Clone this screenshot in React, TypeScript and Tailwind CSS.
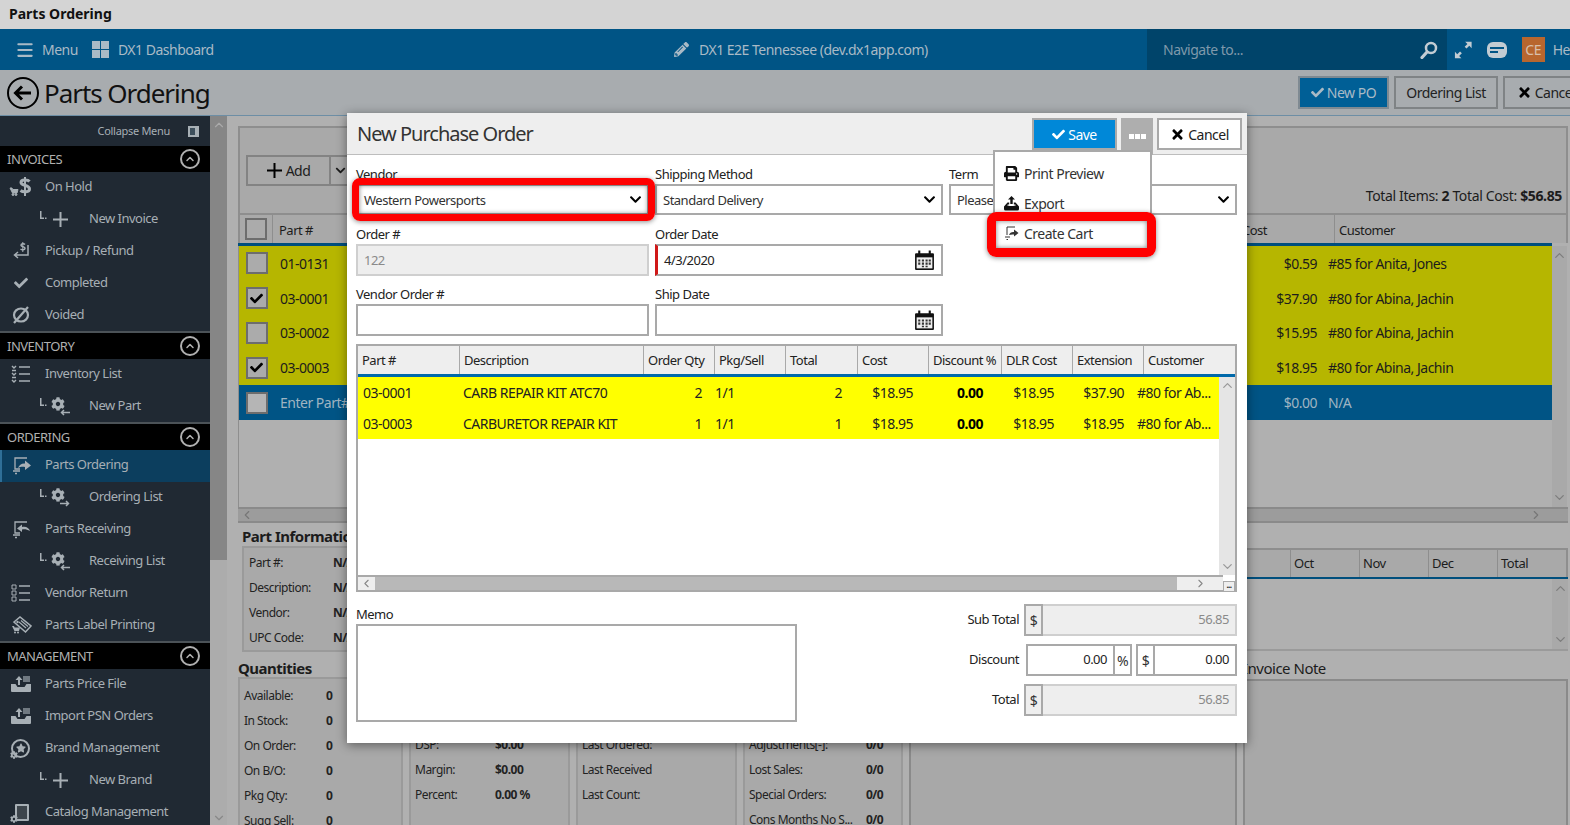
import React from 'react';
import { FaCheck, FaChevronDown, FaCog, FaPencilAlt, FaPrint, FaStar, FaTimes } from 'react-icons/fa';
import { ChevronDown, ChevronLeft, ChevronRight, ChevronUp, Menu } from 'lucide-react';

type SideItem = { label: string; icon: React.ReactNode; sub?: boolean; active?: boolean };

// small cart that sits on the corner of most sidebar icons
const MiniCart = ({ x, y }: { x: number; y: number }) => (
  <g transform={`translate(${x} ${y})`} fill="currentColor">
    <path d="M0 0h2l.6 1.500h5.400l-1 3.500h-4.500z" />
    <circle cx="3" cy="6.500" r="1" />
    <circle cx="6" cy="6.500" r="1" />
  </g>
);

const OnHoldIcon = () => (
  <svg width="24" height="22" viewBox="0 0 24 22" fill="none" stroke="currentColor">
    <path d="M20.500 5.500C19 3.500 12 3 12 6.500c0 3.500 8.500 2 8.500 6.500 0 3.500-6.500 3.500-9 1.500" strokeWidth="3" />
    <path d="M16 1v19" strokeWidth="2" />
    <MiniCart x={1} y={12} />
  </svg>
);

const PickupIcon = () => (
  <svg width="24" height="22" viewBox="0 0 24 22" fill="none" stroke="currentColor">
    <path d="M16 4.500c-1-1-4-1-4 .8 0 2 4 1 4 3 0 1.800-3 1.800-4.500.8" strokeWidth="1.500" />
    <path d="M13.800 2v10" strokeWidth="1" />
    <path d="M19 5v10H6M9 12l-3.500 3L9 18" strokeWidth="1.500" />
  </svg>
);

const VoidIcon = () => (
  <svg width="20" height="20" viewBox="0 0 20 20" fill="none" stroke="currentColor" strokeWidth="2.200">
    <ellipse cx="10" cy="10" rx="7" ry="6.500" />
    <path d="M3 18 17 2" />
  </svg>
);

const ListIcon = ({ tall }: { tall?: boolean }) => (
  <svg width="22" height="20" viewBox="0 0 22 20" fill="none" stroke="currentColor">
    <path d="M9 3h11M9 10h11M9 17h11" strokeWidth="1.500" />
    {tall ? (
      <path d="M2 2h4v4H2zM2 8h4v4H2zM2 14h4v4H2z" strokeWidth="1" />
    ) : (
      <path d="M2 2l2 2 2-2M2 6.500h4M2 9l2 2 2-2M2 13.500h4M2 16l2 2 2-2" strokeWidth="1.400" />
    )}
  </svg>
);

const BoxArrowIcon = ({ back }: { back?: boolean }) => (
  <svg width="22" height="20" viewBox="0 0 22 20" fill="none" stroke="currentColor">
    <path d="M17 3H5v11h5" strokeWidth="1.300" />
    {back ? (
      <path d="M20 12c-1-3-4-5-8-4V5.500L7 9.500l5 3.500V10.500c3-.5 5 0 8 1.500z" fill="currentColor" stroke="none" />
    ) : (
      <path d="M8 13c1-3 4-5 7-4.500V5.500l6 5-6 4.500v-3c-3-.5-5 0-7 1z" fill="currentColor" stroke="none" />
    )}
    <path d="M3 16h7M5 18.500h2" strokeWidth="1.500" />
  </svg>
);

const LabelIcon = () => (
  <svg width="22" height="20" viewBox="0 0 22 20">
    <path d="M4 7 10 2l11 9-5.500 6z" fill="none" stroke="currentColor" strokeWidth="1.600" />
    <path d="M9 7l7 6M11 5.500l7 6" stroke="currentColor" strokeWidth="1.200" />
    <circle cx="7.500" cy="7" r="1.200" fill="currentColor" />
    <g className="text-[#a7afb5]"><MiniCart x={2} y={11} /></g>
  </svg>
);

const TrayIcon = () => (
  <svg width="22" height="20" viewBox="0 0 22 20" fill="currentColor">
    <path d="M1 10h4.500l2 3h7l2-3H21v7a1 1 0 0 1-1 1H2a1 1 0 0 1-1-1z" />
    <path d="M8 11V6H5.500L9 2l3.500 4H10v5z" />
    <rect x="13" y="2" width="7" height="6" opacity="0.6" />
  </svg>
);

const BrandIcon = () => (
  <span className="relative w-[22px] h-[22px] flex items-center justify-center">
    <span className="w-[19px] h-[19px] rounded-full border-2 border-current flex items-center justify-center">
      <FaStar size={10} />
    </span>
    <FaCog size={8} className="absolute left-0 bottom-0" />
  </span>
);

const CatalogIcon = () => (
  <span className="relative w-[22px] h-[22px] flex items-center justify-center">
    <span className="w-[14px] h-[17px] ml-[3px] border-2 border-current bg-[#3d454c] rounded-[1px]" />
    <FaCog size={8} className="absolute left-0 bottom-0" />
  </span>
);

const PlusThin = () => (
  <svg width="15" height="15" viewBox="0 0 15 15" stroke="currentColor" strokeWidth="2">
    <path d="M7.500 0v15M0 7.500h15" />
  </svg>
);

const GearArrow = ({ left }: { left?: boolean }) => (
  <span className="relative w-[18px] h-[18px] block">
    <FaCog size={14} className="absolute left-0 top-0" />
    <svg width="10" height="7" viewBox="0 0 10 7" className="absolute right-[-1px] bottom-[-1px]" fill="none" stroke="currentColor" strokeWidth="1.500">
      {left ? <path d="M10 3.500H2M4 1 1.500 3.500 4 6" /> : <path d="M0 3.500h8M6 1l2.500 2.500L6 6" />}
    </svg>
  </span>
);

const TreeMark = () => (
  <svg width="7" height="9" viewBox="0 0 7 9" fill="currentColor">
    <rect x="0" y="0" width="1.500" height="8" />
    <rect x="0" y="6.500" width="4" height="1.500" />
    <rect x="5" y="6.500" width="1.500" height="1.500" />
  </svg>
);

const SearchIcon = () => (
  <svg width="18" height="18" viewBox="0 0 18 18" fill="none" stroke="#c2ccd3">
    <circle cx="11" cy="7" r="5" strokeWidth="2.500" />
    <path d="M7 11 2 16.500" strokeWidth="3.200" strokeLinecap="round" />
  </svg>
);

const ExpandIcon = () => (
  <svg width="20" height="20" viewBox="0 0 20 20" fill="#c2ccd3">
    <path d="M12 1h7v7l-2.500-2.500-3 3L11.500 6.500l3-3z" />
    <path d="M8 19H1v-7l2.500 2.500 3-3 2 2-3 3z" />
  </svg>
);

const ChatIcon = () => (
  <span className="w-[20px] h-[16px] rounded-[6px] bg-[#c2ccd3] flex flex-col justify-center gap-[2px] pl-[3px]">
    <span className="w-[14px] h-[2px] bg-[#005485]" />
    <span className="w-[8px] h-[2px] bg-[#005485]" />
  </span>
);

const ExportIcon = () => (
  <svg width="15" height="15" viewBox="0 0 15 15" fill="#111">
    <path d="M7.500 0 11 3.500H8.700V8H6.300V3.500H4z" />
    <path d="M3.500 6.500h1.700v1.800c-1.200.2-2 .5-2 .9 0 .9 8.600.9 8.600 0 0-.4-.8-.7-2-.9V6.500h1.700L15 10.500V13a1.500 1.500 0 0 1-1.500 1.500h-12A1.500 1.500 0 0 1 0 13v-2.500z" />
  </svg>
);

const CartExportIcon = () => (
  <svg width="15" height="15" viewBox="0 0 15 15" fill="none" stroke="#333">
    <path d="M11 1H3v8" strokeWidth="1" />
    <path d="M5 9c.7-2 2.500-3.300 5-3V3.500l4.500 3.500L10 10.500V8.500c-2-.3-3.500 0-5 .5z" fill="#333" stroke="none" />
    <path d="M1 11h5M2.500 13.500h1.500" strokeWidth="1.200" />
  </svg>
);

const sections: { title: string; items: SideItem[] }[] = [
  {
    title: 'INVOICES',
    items: [
      { label: 'On Hold', icon: <OnHoldIcon /> },
      { label: 'New Invoice', icon: <PlusThin />, sub: true },
      { label: 'Pickup / Refund', icon: <PickupIcon /> },
      { label: 'Completed', icon: <FaCheck size={14} /> },
      { label: 'Voided', icon: <VoidIcon /> },
    ],
  },
  {
    title: 'INVENTORY',
    items: [
      { label: 'Inventory List', icon: <ListIcon /> },
      { label: 'New Part', icon: <GearArrow left />, sub: true },
    ],
  },
  {
    title: 'ORDERING',
    items: [
      { label: 'Parts Ordering', icon: <BoxArrowIcon />, active: true },
      { label: 'Ordering List', icon: <GearArrow />, sub: true },
      { label: 'Parts Receiving', icon: <BoxArrowIcon back /> },
      { label: 'Receiving List', icon: <GearArrow left />, sub: true },
      { label: 'Vendor Return', icon: <ListIcon tall /> },
      { label: 'Parts Label Printing', icon: <LabelIcon /> },
    ],
  },
  {
    title: 'MANAGEMENT',
    items: [
      { label: 'Parts Price File', icon: <TrayIcon /> },
      { label: 'Import PSN Orders', icon: <TrayIcon /> },
      { label: 'Brand Management', icon: <BrandIcon /> },
      { label: 'New Brand', icon: <PlusThin />, sub: true },
      { label: 'Catalog Management', icon: <CatalogIcon /> },
    ],
  },
];

const bgRows = [
  { part: '01-0131', cost: '$0.59', customer: '#85 for Anita, Jones', checked: false },
  { part: '03-0001', cost: '$37.90', customer: '#80 for Abina, Jachin', checked: true },
  { part: '03-0002', cost: '$15.95', customer: '#80 for Abina, Jachin', checked: false },
  { part: '03-0003', cost: '$18.95', customer: '#80 for Abina, Jachin', checked: true },
];

const poRows = [
  { part: '03-0001', desc: 'CARB REPAIR KIT ATC70', qty: '2', total: '2', ext: '$37.90' },
  { part: '03-0003', desc: 'CARBURETOR REPAIR KIT', qty: '1', total: '1', ext: '$18.95' },
];

const poCols = [
  { label: 'Part #', w: 'w-[102px]' },
  { label: 'Description', w: 'w-[184px]' },
  { label: 'Order Qty', w: 'w-[71px]' },
  { label: 'Pkg/Sell', w: 'w-[71px]' },
  { label: 'Total', w: 'w-[72px]' },
  { label: 'Cost', w: 'w-[71px]' },
  { label: 'Discount %', w: 'w-[73px]' },
  { label: 'DLR Cost', w: 'w-[71px]' },
  { label: 'Extension', w: 'w-[71px]' },
  { label: 'Customer', w: 'flex-1' },
];

const CalendarIcon = () => (
  <svg width="21" height="21" viewBox="0 0 20 20" className="shrink-0">
    <rect x="1" y="3" width="18" height="16" rx="1" fill="#111" />
    <rect x="2.500" y="7" width="15" height="10.500" fill="#eee" />
    <rect x="4" y="0.500" width="2" height="5" fill="#111" />
    <rect x="14" y="0.500" width="2" height="5" fill="#111" />
    <path d="M4 9h2v2H4zM7.500 9h2v2h-2zM11 9h2v2h-2zM14 9h2v2h-2zM4 12h2v2H4zM7.500 12h2v2h-2zM11 12h2v2h-2zM14 12h2v2h-2zM7.500 15h2v1.500h-2zM11 15h2v1.500h-2z" fill="#333" />
  </svg>
);

const Checkbox = ({ checked, light }: { checked?: boolean; light?: boolean }) => (
  <div className={`w-[22px] h-[22px] border-[2px] border-[#6d6d6d] flex items-center justify-center ${light ? 'bg-[#b5b5b5]' : 'bg-[#ababab]'}`}>
    {checked && <FaCheck size={13} className="text-black" />}
  </div>
);

const SideRow = ({ item }: { item: SideItem }) => (
  <div className={`h-[32px] pb-[2px] flex items-center text-[13px] text-[#a7afb5] ${item.active ? 'bg-[#0c3e5e] border-l-2 border-[#2f6f97]' : ''}`}>
    {item.sub ? (
      <>
        <span className="w-[48px] shrink-0 flex justify-end pr-[1px] -mt-[8px]"><TreeMark /></span>
        <span className="w-[24px] shrink-0 flex justify-center">{item.icon}</span>
        <span className="ml-[17px]">{item.label}</span>
      </>
    ) : (
      <>
        <span className={`w-[41px] shrink-0 flex justify-center ${item.active ? '-ml-[2px]' : ''}`}>{item.icon}</span>
        <span className="ml-[4px]">{item.label}</span>
      </>
    )}
  </div>
);

const Sidebar = () => (
  <aside className="w-[210px] shrink-0 bg-[#202933] overflow-hidden">
    <div className="h-[30px] flex items-center justify-end pr-[11px] gap-[18px] text-[11px] text-[#a7afb5] tracking-[-0.3px]">
      <span>Collapse Menu</span>
      <span className="w-[11px] h-[11px] bg-[#3d4f5c] border-2 border-r-[4px] border-[#a7afb5]" />
    </div>
    {sections.map((s, idx) => (
      <div key={s.title} className="mb-[1px]">
        <div className={`h-[26px] bg-black flex items-center justify-between pl-[7px] pr-[10px] text-[13px] text-[#b0b0b0] ${idx > 0 ? 'shadow-[0_-2px_0_#4b5257]' : ''}`}>
          <span className="pt-[1px]">{s.title}</span>
          <span className="w-[20px] h-[20px] rounded-full border-2 border-[#b0b0b0] flex items-center justify-center">
            <ChevronUp size={12} strokeWidth={3} />
          </span>
        </div>
        {s.items.map((i) => (
          <SideRow key={i.label} item={i} />
        ))}
      </div>
    ))}
  </aside>
);

const InfoRow = ({ label, value, w }: { label: string; value: string; w: string }) => (
  <div className="h-[25px] flex items-center text-[12px] text-[#222]">
    <span className={`${w} shrink-0 whitespace-nowrap`}>{label}</span>
    <span className="font-bold">{value}</span>
  </div>
);

const PageBehind = () => (
  <main className="flex-1 min-w-0 bg-[#b0b0b0] pl-[11px] pr-[2px] pt-[10px] overflow-hidden text-[#1c1c1c]">
    {/* Toolbar panel */}
    <div className="h-[87px] border-2 border-b-0 border-[#8e8e8e] bg-[#a9a9a9] flex items-end justify-between pl-[6px] pr-[4px] pb-[7px]">
      <div className="flex mb-[20px]">
        <div className="w-[85px] h-[31px] border-2 border-[#838383] flex items-center justify-center gap-1 text-[14px]">
          <span className="text-black"><PlusThin /></span> Add
        </div>
        <div className="w-[20px] h-[31px] border-2 border-l-0 border-[#838383] flex items-center justify-center">
          <FaChevronDown size={11} />
        </div>
      </div>
      <div className="text-[14px] tracking-[-0.35px]">
        Total Items: <b>2</b> Total Cost: <b>$56.85</b>
      </div>
    </div>
    {/* Grid header */}
    <div className="h-[30px] border-2 border-[#8e8e8e] border-b-0 bg-[#a9a9a9] flex items-center text-[13px]">
      <div className="w-[33px] h-full border-r border-[#8e8e8e] flex items-center justify-center"><Checkbox /></div>
      <span className="ml-[6px] pt-[4px]">Part #</span>
      <div className="flex-1" />
      <div className="w-[92px] h-full flex items-center pt-[4px]">Cost</div>
      <div className="w-[232px] h-full border-l border-[#8e8e8e] flex items-center pl-[4px] pt-[4px]">Customer</div>
    </div>
    <div className="h-[3px] bg-[#004f7d] w-[1314px]" />
    {/* Grid body */}
    <div className="flex h-[261px]">
      <div className="w-[1314px] border-l border-[#8e8e8e]">
        {bgRows.map((r) => (
          <div key={r.part} className="h-[34.8px] bg-[#b6b600] flex items-center text-[14px]">
            <div className="w-[35px] flex justify-center"><Checkbox checked={r.checked} /></div>
            <span className="ml-[6px]">{r.part}</span>
            <div className="flex-1" />
            <span className="w-[70px] text-right">{r.cost}</span>
            <span className="w-[224px] ml-[11px]">{r.customer}</span>
          </div>
        ))}
        <div className="h-[35px] bg-[#005485] flex items-center text-[14px] text-[#9fb4c2]">
          <div className="w-[35px] flex justify-center"><Checkbox light /></div>
          <span className="ml-[6px]">Enter Part#</span>
          <div className="flex-1" />
          <span className="w-[70px] text-right">$0.00</span>
          <span className="w-[224px] ml-[11px]">N/A</span>
        </div>
      </div>
      <div className="w-[15px] flex flex-col items-center justify-between py-[2px] text-[#7d7d7d] bg-[#a9a9a9]">
        <ChevronUp size={15} />
        <ChevronDown size={15} />
      </div>
    </div>
    <div className="h-[16px] flex border-y-2 border-[#8a8a8a] bg-[#9c9c9c] items-center justify-between px-[2px] text-[#777]">
      <ChevronLeft size={14} />
      <div className="flex items-center">
        <ChevronRight size={14} />
        <span className="w-[23px]" />
      </div>
    </div>
    {/* Lower panels */}
    <div className="flex gap-[6px]">
      <div className="w-[999px] shrink-0">
        <h3 className="pl-[4px] text-[15px] font-bold h-[23px] leading-[26px]">Part Information</h3>
        <div className="ml-[4px] h-[106px] border-2 border-[#9a9a9a] bg-[#a9a9a9] pl-[5px] py-[2px]">
          {['Part #:', 'Description:', 'Vendor:', 'UPC Code:'].map((l) => (
            <InfoRow key={l} label={l} value="N/A" w="w-[84px]" />
          ))}
        </div>
        <h3 className="text-[15px] font-bold h-[25px] leading-[32px]">Quantities</h3>
        <div className="flex gap-[6px] h-[160px]">
          <div className="w-[165px] border-2 border-[#9a9a9a] bg-[#a9a9a9] pl-[4px] pt-[4px]">
            {['Available:', 'In Stock:', 'On Order:', 'On B/O:', 'Pkg Qty:', 'Sugg Sell:'].map((l) => (
              <InfoRow key={l} label={l} value="0" w="w-[82px]" />
            ))}
          </div>
          <div className="w-[161px] border-2 border-[#9a9a9a] bg-[#a9a9a9] pl-[4px] pt-[53px]">
            <InfoRow label="DSP:" value="$0.00" w="w-[80px]" />
            <InfoRow label="Margin:" value="$0.00" w="w-[80px]" />
            <InfoRow label="Percent:" value="0.00 %" w="w-[80px]" />
          </div>
          <div className="w-[161px] border-2 border-[#9a9a9a] bg-[#a9a9a9] pl-[4px] pt-[53px]">
            <InfoRow label="Last Ordered:" value="" w="w-[80px]" />
            <InfoRow label="Last Received" value="" w="w-[80px]" />
            <InfoRow label="Last Count:" value="" w="w-[80px]" />
          </div>
          <div className="w-[160px] border-2 border-[#9a9a9a] bg-[#a9a9a9] pl-[4px] pt-[53px]">
            <InfoRow label="Adjustments[-]:" value="0/0" w="w-[117px]" />
            <InfoRow label="Lost Sales:" value="0/0" w="w-[117px]" />
            <InfoRow label="Special Orders:" value="0/0" w="w-[117px]" />
            <InfoRow label="Cons Months No S..." value="0/0" w="w-[117px]" />
          </div>
          <div className="flex-1 border-2 border-[#8a8a8a] bg-[#a8a8a8]" />
        </div>
      </div>
      <div className="flex-1 pt-[25px]">
        <div className="h-[29px] border-2 border-b-0 border-[#8e8e8e] bg-[#a9a9a9] flex justify-end text-[13px]">
          {['Oct', 'Nov', 'Dec', 'Total'].map((m) => (
            <div key={m} className="w-[69px] border-l border-[#8e8e8e] pl-[3px] flex items-center">{m}</div>
          ))}
        </div>
        <div className="h-[2px] bg-[#004f7d]" />
        <div className="h-[72px] flex justify-end border-b-2 border-[#9a9a9a]">
          <div className="w-[16px] bg-[#a9a9a9] flex flex-col items-center justify-between py-[2px] text-[#7d7d7d]">
            <ChevronUp size={15} />
            <ChevronDown size={15} />
          </div>
        </div>
        <div className="h-[28px] text-[15px] leading-[34px]">Invoice Note</div>
        <div className="h-[160px] border-2 border-[#8a8a8a] bg-[#a8a8a8]" />
      </div>
    </div>
  </main>
);

const Field = ({ label, className, children }: { label: string; className: string; children: React.ReactNode }) => (
  <div className={className}>
    <div className="h-[20px] text-[13px] leading-[20px] text-[#222]">{label}</div>
    {children}
  </div>
);

const SelectBox = ({ value }: { value: string }) => (
  <div className="h-[31px] border-2 border-[#a9a9a9] flex items-center justify-between pl-[6px] pr-[5px] text-[13px] text-[#333]">
    <span className="pt-[2px]">{value}</span>
    <FaChevronDown size={13} className="text-black" />
  </div>
);

const Addon = ({ children, muted }: { children: React.ReactNode; muted?: boolean }) => (
  <div className={`w-[19px] shrink-0 h-full flex items-center justify-center text-[14px] text-[#333] border-2 ${muted ? 'border-[#a9a9a9] bg-[#eee]' : 'border-[#a9a9a9]'}`}>
    {children}
  </div>
);

const ReadOnlyAmount = ({ value }: { value: string }) => (
  <div className="h-[32px] w-[213px] flex">
    <Addon muted>$</Addon>
    <div className="flex-1 border-2 border-l-0 border-[#cfcfcf] bg-[#eee] flex items-center justify-end pr-[6px] text-[13px] text-[#8a8a8a]">{value}</div>
  </div>
);

const Modal = () => (
  <div className="absolute left-[347px] top-[113px] w-[900px] h-[630px] bg-white shadow-[0_2px_10px_rgba(0,0,0,0.45)] z-10 text-[#222]">
    {/* Header */}
    <div className="h-[42px] bg-[#eee] border-b border-[#bdbdbd] flex pl-[10px] pr-[5px]">
      <h2 className="text-[20px] text-[#333] tracking-[-1px] leading-[42px]">New Purchase Order</h2>
      <div className="ml-auto flex items-start gap-[4px] pt-[5px]">
        <button className="w-[85px] h-[32px] bg-[#0088d8] border-2 border-[#a9a9a9] text-white text-[14px] flex items-center justify-center gap-[3px]">
          <FaCheck size={13} /> Save
        </button>
        <button className="w-[32px] h-[37px] bg-[#aeaeae] text-white flex items-center justify-center gap-[1px]">
          <span className="w-[5px] h-[5px] bg-white" />
          <span className="w-[5px] h-[5px] bg-white" />
          <span className="w-[5px] h-[5px] bg-white" />
        </button>
        <button className="w-[85px] h-[32px] bg-white border-2 border-[#a9a9a9] text-[14px] text-[#222] flex items-center justify-center gap-[3px]">
          <FaTimes size={15} className="text-black" /> Cancel
        </button>
      </div>
    </div>

    {/* Form */}
    <div className="pl-[9px] pr-[9px] pt-[9px]">
      <div className="grid grid-cols-[293px_288px_288px] gap-x-[6px]">
        <Field label="Vendor" className="">
          <SelectBox value="Western Powersports" />
        </Field>
        <Field label="Shipping Method" className="">
          <SelectBox value="Standard Delivery" />
        </Field>
        <Field label="Term" className="">
          <SelectBox value="Please Select" />
        </Field>
      </div>
      <div className="grid grid-cols-[293px_288px] gap-x-[6px] mt-[9px]">
        <Field label="Order #" className="">
          <div className="h-[32px] border-2 border-[#cfcfcf] bg-[#eee] flex items-center pl-[6px] pt-[1px] text-[13px] text-[#8a8a8a]">122</div>
        </Field>
        <Field label="Order Date" className="">
          <div className="h-[32px] border-2 border-l-[3px] border-[#a9a9a9] border-l-[#d01818] flex items-center justify-between pl-[6px] pr-[6px] text-[13px]">
            <span className="pt-[1px]">4/3/2020</span> <CalendarIcon />
          </div>
        </Field>
        <Field label="Vendor Order #" className="mt-[8px]">
          <div className="h-[32px] border-2 border-[#a9a9a9]" />
        </Field>
        <Field label="Ship Date" className="mt-[8px]">
          <div className="h-[32px] border-2 border-[#a9a9a9] flex items-center justify-end pr-[6px]">
            <CalendarIcon />
          </div>
        </Field>
      </div>

      {/* Line items */}
      <div className="mt-[8px] w-[881px] border-2 border-b-0 border-[#a9a9a9]">
        <div className="h-[28px] bg-[#eee] flex text-[13px]">
          {poCols.map((c, i) => (
            <div key={c.label} className={`${c.w} pl-[4px] pt-[1px] flex items-center whitespace-nowrap ${i < poCols.length - 1 ? 'border-r border-[#a9a9a9]' : ''}`}>
              {c.label}
            </div>
          ))}
        </div>
        <div className="h-[3px] bg-[#0069aa]" />
        <div className="flex h-[198px]">
          <div className="flex-1 min-w-0">
            {poRows.map((r) => (
              <div key={r.part} className="h-[31px] bg-[#ffff00] flex items-center text-[14px] text-[#222] whitespace-nowrap">
                <span className="w-[102px] pl-[5px]">{r.part}</span>
                <span className="w-[184px] pl-[3px]">{r.desc}</span>
                <span className="w-[71px] text-right pr-[13px]">{r.qty}</span>
                <span className="w-[71px]">1/1</span>
                <span className="w-[72px] text-right pr-[16px]">{r.total}</span>
                <span className="w-[71px] text-right pr-[16px]">$18.95</span>
                <span className="w-[73px] text-right pr-[19px] font-bold text-black">0.00</span>
                <span className="w-[71px] text-right pr-[19px]">$18.95</span>
                <span className="w-[71px] text-right pr-[20px]">{r.ext}</span>
                <span className="-ml-[7px]">#80 for Ab...</span>
              </div>
            ))}
          </div>
          <div className="w-[16px] bg-[#e5e5e5] flex flex-col items-center justify-between py-[1px] text-[#999]">
            <ChevronUp size={15} />
            <ChevronDown size={15} />
          </div>
        </div>
        <div className="h-[17px] flex">
          <div className="flex-1 bg-[#b8b8b8] border-y-2 border-[#a9a9a9] flex justify-between">
            <span className="w-[17px] bg-[#eee] flex items-center justify-center text-[#888]"><ChevronLeft size={13} /></span>
            <span className="w-[46px] bg-[#eee] flex items-center justify-center text-[#888]"><ChevronRight size={13} /></span>
          </div>
          <div className="w-[12px] flex items-end">
            <span className="w-[12px] h-[11px] border border-[#a9a9a9] bg-[#eee] text-[8px] leading-[6px] text-center font-bold">...</span>
          </div>
        </div>
      </div>

      {/* Memo and totals */}
      <div className="flex justify-between w-[881px] mt-[12px]">
        <div className="pt-[1px]">
          <div className="h-[19px] text-[13px] leading-[19px]">Memo</div>
          <div className="w-[441px] h-[98px] border-2 border-[#a9a9a9]" />
        </div>
        <div className="flex flex-col items-end gap-[8px] text-[13px]">
          <div className="flex items-center gap-[5px]">
            <span>Sub Total</span>
            <ReadOnlyAmount value="56.85" />
          </div>
          <div className="flex items-center gap-[7px]">
            <span>Discount</span>
            <div className="flex h-[32px]">
              <div className="w-[87px] border-2 border-r-0 border-[#a9a9a9] flex items-center justify-end pr-[6px]">0.00</div>
              <Addon>%</Addon>
              <div className="w-[4px]" />
              <Addon>$</Addon>
              <div className="w-[82px] border-2 border-l-0 border-[#a9a9a9] flex items-center justify-end pr-[6px]">0.00</div>
            </div>
          </div>
          <div className="flex items-center gap-[5px]">
            <span>Total</span>
            <ReadOnlyAmount value="56.85" />
          </div>
        </div>
      </div>
    </div>

    {/* Dropdown of the ... button */}
    <div className="absolute left-[646px] top-[37px] w-[159px] h-[105px] bg-white border-2 border-[#a9a9a9] pt-[6px] text-[14px] text-[#333] z-20">
      <div className="h-[30px] flex items-center pl-[9px] gap-[5px]"><FaPrint size={15} className="text-[#111]" /> Print Preview</div>
      <div className="h-[30px] flex items-center pl-[9px] gap-[5px]"><ExportIcon /> Export</div>
      <div className="h-[30px] flex items-center pl-[9px] gap-[5px]"><CartExportIcon /> Create Cart</div>
    </div>

    {/* Red callouts */}
    <div className="absolute left-[5px] top-[65px] w-[303px] h-[43px] border-[7px] border-[#ff0000] rounded-[8px] shadow-[0_1px_5px_rgba(0,0,0,0.45),inset_0_0_5px_rgba(0,0,0,0.5)] z-30" />
    <div className="absolute left-[640px] top-[99px] w-[169px] h-[45px] border-[9px] border-[#ff0000] rounded-[9px] shadow-[0_1px_5px_rgba(0,0,0,0.45),inset_0_0_5px_rgba(0,0,0,0.5)] z-30" />
  </div>
);

const App = () => {
  return (
    <div className="w-[1570px] h-[825px] relative overflow-hidden flex flex-col bg-[#b0b0b0] font-['Noto_Sans',sans-serif] tracking-[-0.5px]">
      {/* Window title */}
      <div className="h-[29px] shrink-0 bg-[#d4d4d4] flex items-center pl-[9px] pb-[2px] text-[14px] font-bold text-[#111] tracking-normal">Parts Ordering</div>

      {/* Nav */}
      <nav className="h-[41px] shrink-0 bg-[#005485] flex items-center text-[14px] text-[#a9bac6]">
        <div className="w-[673px] shrink-0 flex items-center pl-[15px]">
          <Menu size={20} strokeWidth={2.5} />
          <span className="ml-[7px]">Menu</span>
          <span className="ml-[14px] grid grid-cols-2 gap-[1px]">
            <span className="w-[8px] h-[8px] bg-[#a9bac6]" />
            <span className="w-[8px] h-[8px] bg-[#a9bac6]" />
            <span className="w-[8px] h-[8px] bg-[#a9bac6]" />
            <span className="w-[8px] h-[8px] bg-[#a9bac6]" />
          </span>
          <span className="ml-[9px]">DX1 Dashboard</span>
        </div>
        <div className="flex-1 flex items-center gap-[10px] pl-[1px]">
          <FaPencilAlt size={15} />
          <span>DX1 E2E Tennessee (dev.dx1app.com)</span>
        </div>
        <div className="w-[300px] h-full bg-[#00446a] flex items-center justify-between pl-[16px] pr-[9px]">
          <span className="text-[#7f99ab]">Navigate to...</span>
          <SearchIcon />
        </div>
        <div className="w-[123px] shrink-0 flex items-center pl-[7px]">
          <ExpandIcon />
          <span className="ml-[14px]"><ChatIcon /></span>
          <span className="ml-[15px] w-[25px] h-[25px] bg-[#b8662e] flex items-center justify-center text-[#d8c0ac]">CE</span>
          <span className="ml-[8px]">He</span>
        </div>
      </nav>

      {/* Page title */}
      <header className="h-[46px] shrink-0 bg-[#a8acaf] border-b border-[#6d8ea5] flex items-center pl-[7px] overflow-hidden">
        <span className="w-[32px] h-[32px] rounded-full border-[2px] border-black flex items-center justify-center">
          <svg width="20" height="16" viewBox="0 0 20 16" fill="none" stroke="black" strokeWidth="3"><path d="M9 1.500 2.500 8 9 14.500M3 8h15" /></svg>
        </span>
        <h1 className="ml-[5px] pt-[2px] text-[26px] text-[#111] tracking-[-1.05px]">Parts Ordering</h1>
        <div className="ml-auto flex gap-[5px] -mr-[19px] text-[14px] pb-[1px]">
          <div className="w-[91px] h-[33px] bg-[#005f96] border-2 border-[#7f8a92] flex items-center justify-center gap-[3px] text-[#a9bac6]">
            <FaCheck size={13} /> New PO
          </div>
          <div className="w-[104px] h-[33px] border-2 border-[#7f8385] flex items-center justify-center text-[#222]">Ordering List</div>
          <div className="w-[86px] h-[33px] border-2 border-[#7f8385] flex items-center justify-center gap-[3px] text-[#222]">
            <FaTimes size={15} className="text-black" /> Cancel
          </div>
        </div>
      </header>

      {/* Body */}
      <div className="flex flex-1 min-h-0">
        <Sidebar />
        <div className="w-[17px] shrink-0 flex flex-col">
          <div className="h-[444px] bg-[#868686] flex justify-center pt-[2px] text-[#aaa]"><ChevronUp size={14} /></div>
          <div className="flex-1 bg-[#acacac] flex items-end justify-center text-[#888]"><ChevronDown size={14} /></div>
        </div>
        <PageBehind />
      </div>

      <Modal />
    </div>
  );
};

export default App;
